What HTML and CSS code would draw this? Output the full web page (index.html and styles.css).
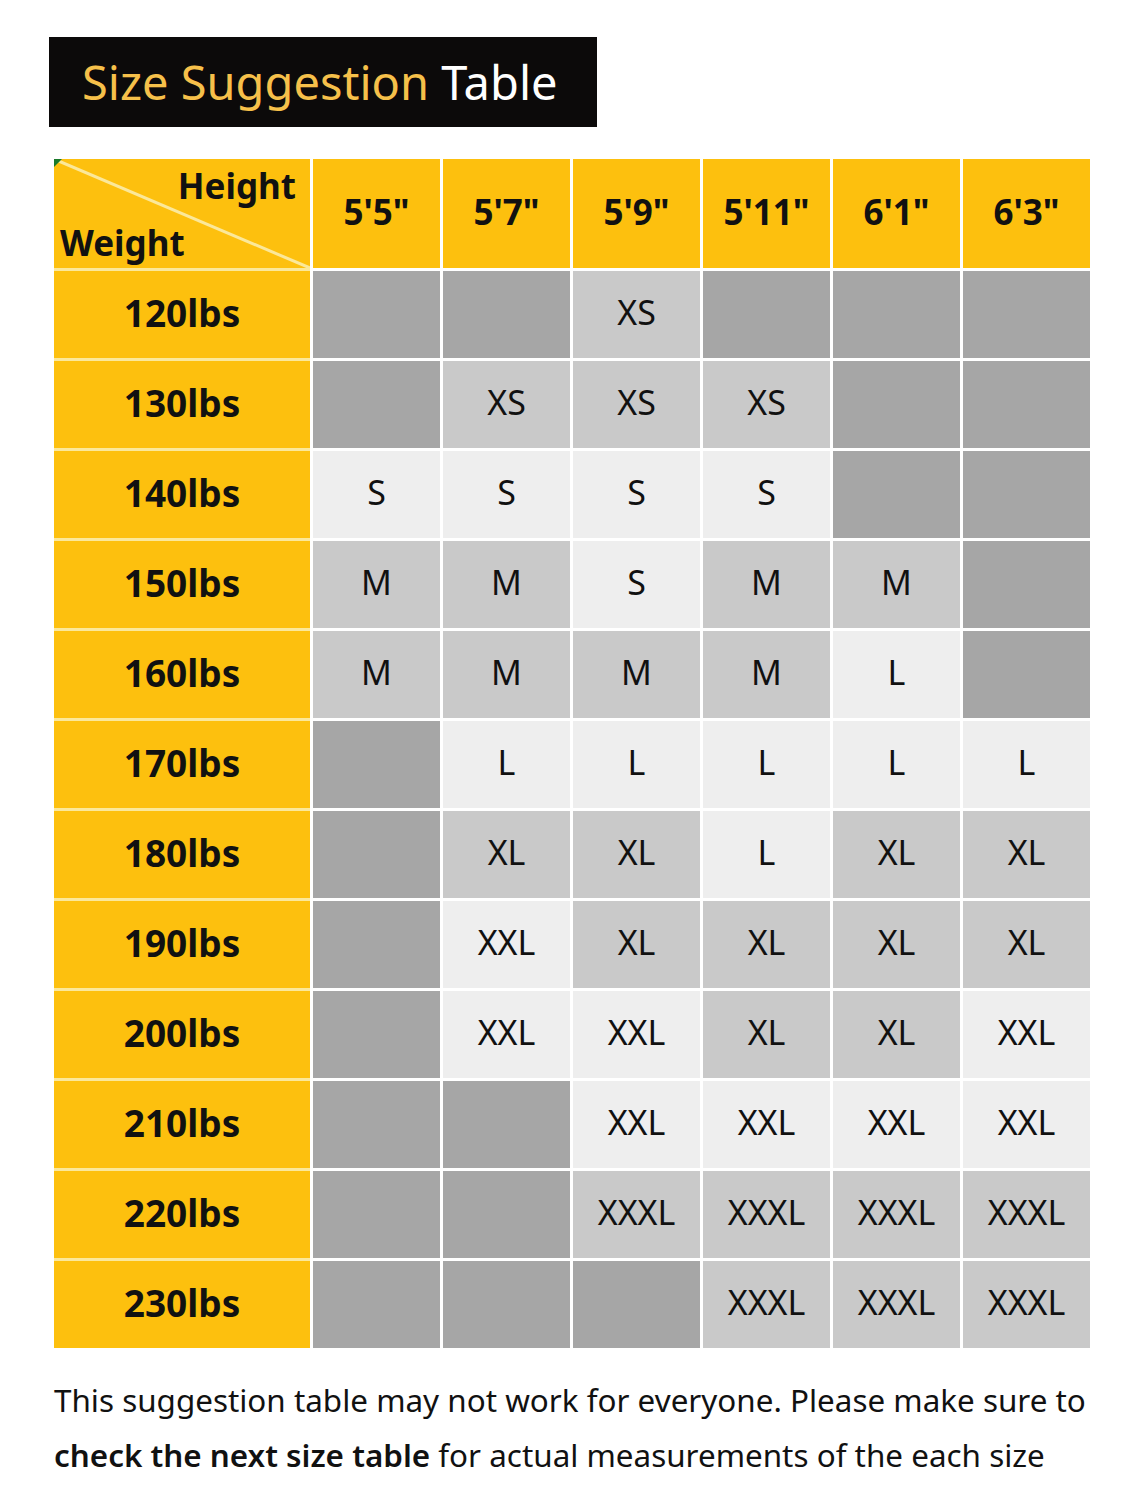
FILE: index.html
```html
<!DOCTYPE html>
<html>
<head>
<meta charset="utf-8">
<link rel="stylesheet" href="styles.css">
</head>
<body>
<div class="page">
  <div class="title"><span class="gold">Size Suggestion</span> Table</div>
  <div class="grid">
    <div class="corner">
      <svg class="diag" viewBox="0 0 256 109" preserveAspectRatio="none"><line x1="0" y1="0" x2="256" y2="109" stroke="#fbe89a" stroke-width="3"/></svg>
      <span class="tri"></span>
      <span class="h-lbl">Height</span>
      <span class="w-lbl">Weight</span>
    </div>
    <div class="hd">5'5"</div><div class="hd">5'7"</div><div class="hd">5'9"</div><div class="hd">5'11"</div><div class="hd">6'1"</div><div class="hd">6'3"</div>

    <div class="rl">120lbs</div><div class="c d"></div><div class="c d"></div><div class="c m">XS</div><div class="c d"></div><div class="c d"></div><div class="c d"></div>
    <div class="rl">130lbs</div><div class="c d"></div><div class="c m">XS</div><div class="c m">XS</div><div class="c m">XS</div><div class="c d"></div><div class="c d"></div>
    <div class="rl">140lbs</div><div class="c l">S</div><div class="c l">S</div><div class="c l">S</div><div class="c l">S</div><div class="c d"></div><div class="c d"></div>
    <div class="rl">150lbs</div><div class="c m">M</div><div class="c m">M</div><div class="c l">S</div><div class="c m">M</div><div class="c m">M</div><div class="c d"></div>
    <div class="rl">160lbs</div><div class="c m">M</div><div class="c m">M</div><div class="c m">M</div><div class="c m">M</div><div class="c l">L</div><div class="c d"></div>
    <div class="rl">170lbs</div><div class="c d"></div><div class="c l">L</div><div class="c l">L</div><div class="c l">L</div><div class="c l">L</div><div class="c l">L</div>
    <div class="rl">180lbs</div><div class="c d"></div><div class="c m">XL</div><div class="c m">XL</div><div class="c l">L</div><div class="c m">XL</div><div class="c m">XL</div>
    <div class="rl">190lbs</div><div class="c d"></div><div class="c l">XXL</div><div class="c m">XL</div><div class="c m">XL</div><div class="c m">XL</div><div class="c m">XL</div>
    <div class="rl">200lbs</div><div class="c d"></div><div class="c l">XXL</div><div class="c l">XXL</div><div class="c m">XL</div><div class="c m">XL</div><div class="c l">XXL</div>
    <div class="rl">210lbs</div><div class="c d"></div><div class="c d"></div><div class="c l">XXL</div><div class="c l">XXL</div><div class="c l">XXL</div><div class="c l">XXL</div>
    <div class="rl">220lbs</div><div class="c d"></div><div class="c d"></div><div class="c m">XXXL</div><div class="c m">XXXL</div><div class="c m">XXXL</div><div class="c m">XXXL</div>
    <div class="rl">230lbs</div><div class="c d"></div><div class="c d"></div><div class="c d"></div><div class="c m">XXXL</div><div class="c m">XXXL</div><div class="c m">XXXL</div>
  </div>
  <p class="note">This suggestion table may not work for everyone. Please make sure to<br><b>check the next size table</b> for actual measurements of the each size</p>
</div>
</body>
</html>
```
FILE: styles.css
```css
html, body {
  margin: 0;
  padding: 0;
  background: #ffffff;
}
.page {
  width: 1132px;
  height: 1501px;
  padding-top: 37px;
  box-sizing: border-box;
  font-family: "Noto Sans", "Open Sans", sans-serif;
  color: #111;
}
.title {
  margin-left: 49px;
  width: 548px;
  height: 90px;
  box-sizing: border-box;
  background: #0c0a0a;
  color: #ffffff;
  font-size: 47px;
  line-height: 90px;
  padding-left: 33px;
  white-space: nowrap;
}
.gold { color: #f6c04a; }
.grid {
  margin: 32px 0 0 54px;
  width: 1036px;
  display: grid;
  grid-template-columns: 256px repeat(6, 127px);
  grid-template-rows: 109px repeat(12, 87px);
  column-gap: 3px;
  row-gap: 3px;
  background:
    linear-gradient(#fbe89a, #fbe89a) 0 0 / 256px 100% no-repeat,
    #ffffff;
}
.corner {
  position: relative;
  background: #fdc00e;
  font-weight: 700;
  font-size: 35px;
}
.diag {
  position: absolute;
  left: 0; top: 0;
  width: 100%; height: 100%;
}
.tri {
  position: absolute;
  left: 0; top: 0;
  width: 0; height: 0;
  border-top: 8px solid #1a7a2a;
  border-right: 8px solid transparent;
}
.h-lbl {
  position: absolute;
  right: 14px;
  top: 3px;
}
.w-lbl {
  position: absolute;
  left: 6px;
  bottom: 2px;
}
.hd {
  background: #fdc00e;
  display: flex;
  align-items: center;
  justify-content: center;
  font-weight: 700;
  font-size: 35px;
  padding-bottom: 4px;
  box-sizing: border-box;
}
.rl {
  background: #fdc00e;
  display: flex;
  align-items: center;
  justify-content: center;
  font-weight: 700;
  font-size: 37px;
  padding-bottom: 4px;
  box-sizing: border-box;
}
.c {
  display: flex;
  align-items: center;
  justify-content: center;
  font-size: 34px;
  padding-bottom: 6px;
  box-sizing: border-box;
}
.d { background: #a6a6a6; }
.m { background: #c9c9c9; }
.l { background: #eeeeee; }
.note {
  margin: 24px 0 0 54px;
  font-size: 31.4px;
  line-height: 55px;
  color: #111;
  white-space: nowrap;
}
.note b { font-weight: 600; }
```
